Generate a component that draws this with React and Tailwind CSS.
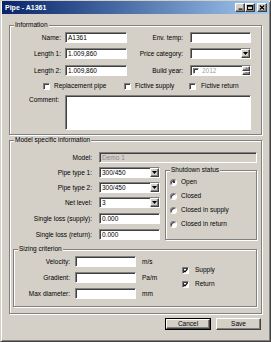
import React from 'react';

const sunken = 'border border-t-[#808080] border-l-[#808080] border-r-white border-b-white shadow-[inset_1px_1px_0_#404040]';
const raised = 'bg-[#d4d0c8] border border-t-white border-l-white border-r-[#404040] border-b-[#404040] shadow-[inset_-1px_-1px_0_#808080]';

function Field({ className = '', children, disabled }) {
    return (
        <div className={`h-[11px] flex items-center ${sunken} ${disabled ? 'bg-[#d4d0c8] text-[#8a8a8a]' : 'bg-white'} ${className}`}>
            <span className="pl-[2px] leading-[9px] whitespace-nowrap">{children}</span>
        </div>
    );
}

function DropButton() {
    return (
        <div className={`ml-auto h-[9px] w-[9px] flex items-center justify-center ${raised}`}>
            <svg width="5" height="3" viewBox="0 0 5 3"><path d="M0 0h5L2.5 3z" fill="#000" /></svg>
        </div>
    );
}

function Select({ className = '', children }) {
    return (
        <div className={`h-[11px] flex items-center bg-white ${sunken} ${className}`}>
            <span className="pl-[2px] leading-[9px] whitespace-nowrap">{children}</span>
            <DropButton />
        </div>
    );
}

function Check({ checked, small }) {
    return (
        <div className={`${small ? 'w-[6px] h-[6px]' : 'w-[7px] h-[7px]'} shrink-0 bg-white ${sunken} flex items-center justify-center`}>
            {checked && (
                <svg width="5" height="5" viewBox="0 0 5 5"><path d="M0.6 2.4 L2 3.9 L4.5 0.9" stroke="#000" strokeWidth="1.2" fill="none" /></svg>
            )}
        </div>
    );
}

function Radio({ checked }) {
    return (
        <div className="w-[7px] h-[7px] shrink-0 rounded-full bg-white border border-t-[#808080] border-l-[#808080] border-r-white border-b-white shadow-[inset_1px_1px_0_#404040] flex items-center justify-center">
            {checked && <div className="w-[2px] h-[2px] rounded-full bg-black" />}
        </div>
    );
}

function Group({ title, className = '', children }) {
    return (
        <div className={`relative border border-[#808080] shadow-[1px_1px_0_#fff,inset_1px_1px_0_#fff] ${className}`}>
            <span className="absolute left-[4px] -top-[5px] bg-[#d4d0c8] px-[1px] leading-[8px] whitespace-nowrap">{title}</span>
            {children}
        </div>
    );
}

function TitleButton({ className = '', children }) {
    return (
        <div className={`w-[10px] h-[9px] flex items-center justify-center ${raised} ${className}`}>
            {children}
        </div>
    );
}

export default function App() {
    return (
        <div className="w-[271px] h-[342px] bg-[#d4d0c8] font-['Liberation_Sans',Arial,sans-serif] text-[6.5px] text-black flex flex-col border border-t-[#d4d0c8] border-l-[#d4d0c8] border-r-[#404040] border-b-[#404040] shadow-[inset_1px_1px_0_#fff,inset_-1px_-1px_0_#808080]">
            {/* Title bar */}
            <div className="mx-[1px] h-[13px] flex items-center bg-linear-to-r from-[#0a246a] to-[#a6caf0]">
                <span className="ml-[3px] text-white font-bold text-[7px] leading-[9px]">Pipe - A1361</span>
                <div className="ml-auto mr-[2px] flex items-center">
                    <TitleButton>
                        <svg width="5" height="5" viewBox="0 0 5 5"><rect x="0.5" y="3.5" width="4" height="1.2" fill="#000" /></svg>
                    </TitleButton>
                    <TitleButton>
                        <svg width="6" height="5" viewBox="0 0 6 5"><rect x="0.5" y="0.5" width="5" height="4" stroke="#000" fill="none" /><rect x="0.5" y="0.5" width="5" height="1.2" fill="#000" /></svg>
                    </TitleButton>
                    <TitleButton className="ml-[2px]">
                        <svg width="6" height="5" viewBox="0 0 6 5"><path d="M0.8 0.5 L5.2 4.5 M5.2 0.5 L0.8 4.5" stroke="#000" strokeWidth="1.3" /></svg>
                    </TitleButton>
                </div>
            </div>

            <div className="px-[8px] flex flex-col">
                {/* Information */}
                <Group title="Information" className="mt-[11px] h-[110px]">
                    <div className="mt-[6px] h-[11px] flex items-center">
                        <div className="w-[51px] text-right">Name:</div>
                        <Field className="ml-[4px] w-[62px]">A1361</Field>
                        <div className="w-[56px] text-right">Env. temp:</div>
                        <Field className="ml-[7px] w-[61px]" />
                    </div>
                    <div className="mt-[5px] h-[11px] flex items-center">
                        <div className="w-[51px] text-right">Length 1:</div>
                        <Field className="ml-[4px] w-[62px]">1.009,860</Field>
                        <div className="w-[56px] text-right">Price category:</div>
                        <Select className="ml-[7px] w-[61px]" />
                    </div>
                    <div className="mt-[6px] h-[11px] flex items-center">
                        <div className="w-[51px] text-right">Length 2:</div>
                        <Field className="ml-[4px] w-[62px]">1.009,860</Field>
                        <div className="w-[56px] text-right">Build year:</div>
                        <div className={`ml-[7px] w-[61px] h-[11px] flex items-center bg-white ${sunken}`}>
                            <div className="ml-[2px]"><Check small /></div>
                            <span className="ml-[3px] text-[#a0a0a0] leading-[9px]">2012</span>
                            <div className="ml-auto flex flex-col">
                                <div className={`w-[8px] h-[4.5px] flex items-center justify-center ${raised}`}>
                                    <svg width="3" height="2" viewBox="0 0 3 2"><path d="M0 2h3L1.5 0z" fill="#808080" /></svg>
                                </div>
                                <div className={`w-[8px] h-[4.5px] flex items-center justify-center ${raised}`}>
                                    <svg width="3" height="2" viewBox="0 0 3 2"><path d="M0 0h3L1.5 2z" fill="#808080" /></svg>
                                </div>
                            </div>
                        </div>
                    </div>
                    <div className="mt-[6px] h-[8px] flex items-center">
                        <div className="ml-[33px] w-[81px] flex items-center">
                            <Check />
                            <span className="ml-[4px]">Replacement pipe</span>
                        </div>
                        <div className="w-[65px] flex items-center">
                            <Check />
                            <span className="ml-[4px]">Fictive supply</span>
                        </div>
                        <div className="flex items-center">
                            <Check />
                            <span className="ml-[5px]">Fictive return</span>
                        </div>
                    </div>
                    <div className="mt-[5px] flex">
                        <div className="w-[49px] text-right pt-[1px] leading-[8px]">Comment:</div>
                        <div className={`ml-[6px] w-[186px] h-[35px] bg-white ${sunken}`} />
                    </div>
                </Group>

                {/* Model specific information */}
                <Group title="Model specific information" className="mt-[5px] h-[174px]">
                    <div className="mt-[11px] h-[11px] flex items-center">
                        <div className="w-[82px] text-right">Model:</div>
                        <Field disabled className="ml-[7px] w-[158px]">Demo 1</Field>
                    </div>
                    <div className="mt-[4px] flex items-start">
                        <div className="flex flex-col">
                            {[
                                ['Pipe type 1:', '300/450', true, 'mt-0'],
                                ['Pipe type 2:', '300/450', true, 'mt-[4px]'],
                                ['Net level:', '3', true, 'mt-[4px]'],
                                ['Single loss (supply):', '0.000', false, 'mt-[5px]'],
                                ['Single loss (return):', '0.000', false, 'mt-[5px]'],
                            ].map(([label, value, isSelect, mt]) => (
                                <div key={label} className={`${mt} h-[11px] flex items-center`}>
                                    <div className="w-[82px] text-right whitespace-nowrap">{label}</div>
                                    {isSelect
                                        ? <Select className="ml-[7px] w-[61px]">{value}</Select>
                                        : <Field className="ml-[7px] w-[61px]">{value}</Field>}
                                </div>
                            ))}
                        </div>
                        <Group title="Shutdown status" className="ml-[5px] mt-[3px] w-[92px] h-[70px]">
                            {[
                                ['Open', true, 'mt-[7px]'],
                                ['Closed', false, 'mt-[6px]'],
                                ['Closed in supply', false, 'mt-[6px]'],
                                ['Closed in return', false, 'mt-[6px]'],
                            ].map(([label, on, mt]) => (
                                <div key={label} className={`${mt} h-[8px] flex items-center ml-[4px]`}>
                                    <Radio checked={on} />
                                    <span className="ml-[4px]">{label}</span>
                                </div>
                            ))}
                        </Group>
                    </div>

                    <Group title="Sizing criterion" className="mt-[9px] ml-[3px] w-[244px] h-[58px]">
                        <div className="flex items-start">
                            <div className="flex flex-col">
                                {[
                                    ['Velocity:', 'm/s', 'mt-[6px]'],
                                    ['Gradient:', 'Pa/m', 'mt-[5px]'],
                                    ['Max diameter:', 'mm', 'mt-[5px]'],
                                ].map(([label, unit, mt]) => (
                                    <div key={label} className={`${mt} h-[11px] flex items-center`}>
                                        <div className="w-[56px] text-right whitespace-nowrap">{label}</div>
                                        <Field className="ml-[5px] w-[61px]" />
                                        <span className="ml-[6px] w-[30px]">{unit}</span>
                                    </div>
                                ))}
                            </div>
                            <div className="ml-[10px] mt-[16px] flex flex-col">
                                <div className="h-[8px] flex items-center">
                                    <Check checked />
                                    <span className="ml-[6px]">Supply</span>
                                </div>
                                <div className="mt-[6px] h-[8px] flex items-center">
                                    <Check checked />
                                    <span className="ml-[6px]">Return</span>
                                </div>
                            </div>
                        </div>
                    </Group>
                </Group>

                {/* Buttons */}
                <div className="mt-[4px] mr-[1px] flex justify-end">
                    <div className="w-[46px] h-[12px] border border-black">
                        <div className={`w-full h-full flex items-center justify-center ${raised}`}>Cancel</div>
                    </div>
                    <div className={`ml-[5px] w-[45px] h-[12px] flex items-center justify-center ${raised}`}>Save</div>
                </div>
            </div>
        </div>
    );
}
